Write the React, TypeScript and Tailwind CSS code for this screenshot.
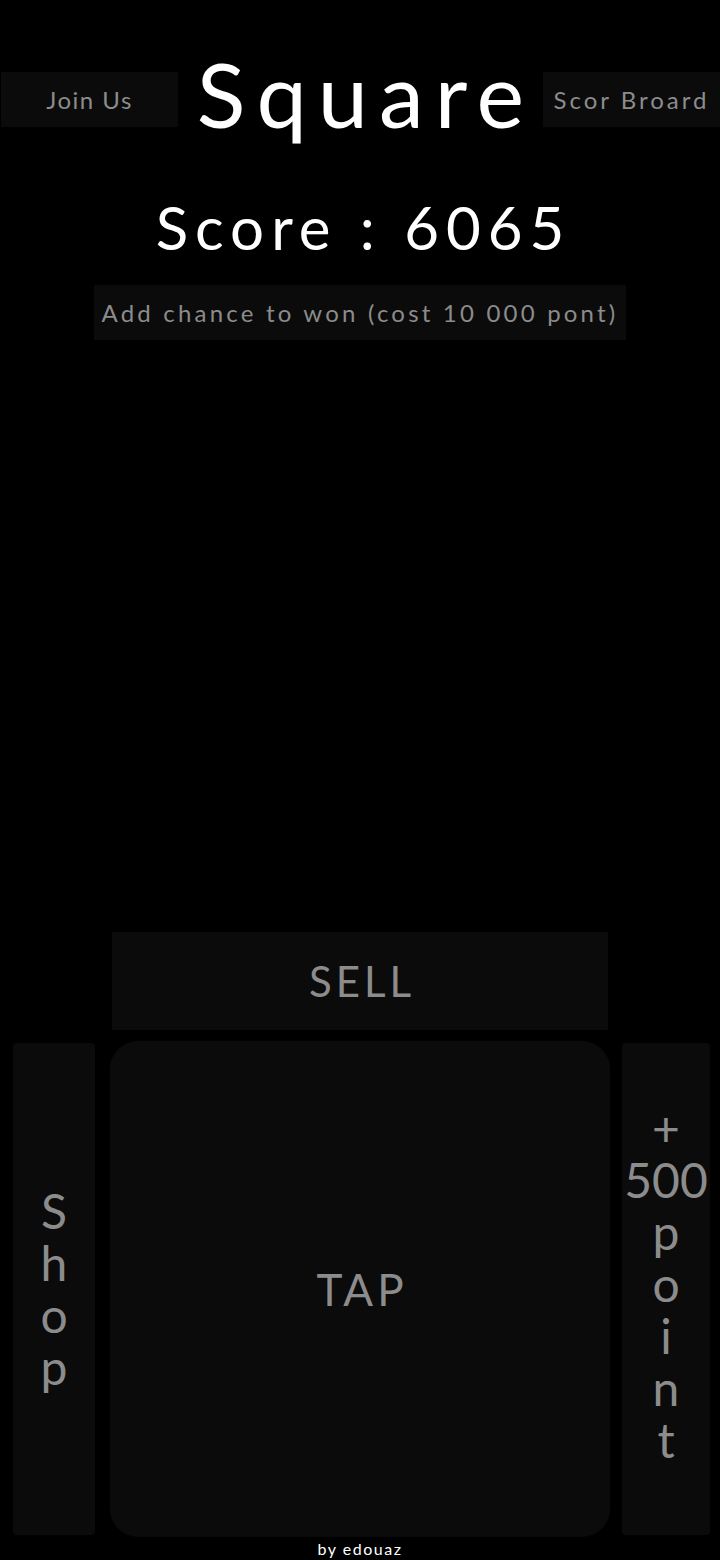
import React from 'react';

const Stack: React.FC<{ items: string[] }> = ({ items }) => (
  <div className="flex flex-col items-center text-[48px] leading-[52px] text-[#8c8c8c]">
    {items.map((c, i) => (
      <span key={i}>{c}</span>
    ))}
  </div>
);

const App: React.FC = () => {
  return (
    <div className="w-[720px] h-[1560px] bg-black flex flex-col overflow-hidden font-[Lato,'DejaVu_Sans',sans-serif]">
      {/* header */}
      <div className="flex items-start h-[150px]">
        <button className="mt-[72px] ml-[1px] w-[177px] h-[55px] bg-[#0b0b0b] text-[#8c8c8c] text-[24px] tracking-[1.5px] flex items-center justify-center">
          Join Us
        </button>
        <h1 className="flex-1 text-center text-white text-[90px] leading-none mt-[48px] tracking-[11px] pl-[11px] font-normal">
          Square
        </h1>
        <button className="mt-[72px] w-[177px] h-[55px] bg-[#0b0b0b] text-[#8c8c8c] text-[24px] tracking-[3px] flex items-center justify-center">
          Scor Broard
        </button>
      </div>

      {/* score */}
      <div className="mt-[47px] text-center text-white text-[60px] leading-none tracking-[7px] pl-[7px]">Score : 6065</div>

      <div className="flex justify-center mt-[28px]">
        <button className="w-[532px] h-[55px] bg-[#0b0b0b] text-[#8c8c8c] text-[24px] tracking-[3.2px] flex items-center justify-center">
          Add chance to won (cost 10 000 pont)
        </button>
      </div>

      <div className="flex-1" />

      {/* controls */}
      <div className="flex justify-center">
        <button className="w-[496px] h-[98px] bg-[#0b0b0b] text-[#8c8c8c] text-[42px] tracking-[4px] pl-[4px] flex items-center justify-center">
          SELL
        </button>
      </div>

      <div className="flex items-center mt-[11px] h-[496px]">
        <div className="ml-[13px] w-[82px] h-[492px] bg-[#0b0b0b] rounded-[4px] flex items-center justify-center">
          <Stack items={['S', 'h', 'o', 'p']} />
        </div>
        <button className="ml-[15px] w-[500px] h-[496px] bg-[#0b0b0b] rounded-[28px] text-[#8c8c8c] text-[44px] tracking-[4px] pl-[4px] flex items-center justify-center">
          TAP
        </button>
        <div className="ml-[12px] w-[88px] h-[492px] bg-[#0b0b0b] rounded-[4px] flex items-start justify-center pt-[59px]">
          <Stack items={['+', '500', 'p', 'o', 'i', 'n', 't']} />
        </div>
      </div>

      <div className="h-[23px] text-center text-white text-[16px] leading-[23px] tracking-[1.5px]">
        by edouaz
      </div>
    </div>
  );
};

export default App;
